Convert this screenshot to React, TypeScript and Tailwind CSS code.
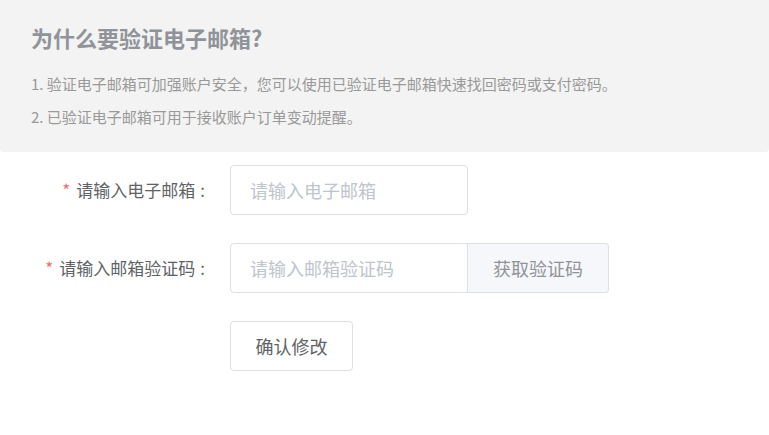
import React, { useState } from "react";

const FONT = {
  fontFamily: '"Microsoft YaHei", "Noto Sans CJK SC", "Noto Sans", sans-serif',
};

type FieldProps = {
  label: string;
  children: React.ReactNode;
};

function FormRow({ label, children }: FieldProps) {
  return (
    <div className="flex items-center">
      <label className="w-[230px] pr-[25px] text-right text-[17px] leading-[50px] text-[#606266] shrink-0">
        <span className="text-[#f56c6c] mr-[6px]">*</span>
        {label}
        <span className="ml-[5px]">:</span>
      </label>
      {children}
    </div>
  );
}

export default function App() {
  const [email, setEmail] = useState("");
  const [code, setCode] = useState("");

  return (
    <div className="w-[769px] h-[435px] bg-white overflow-hidden" style={FONT}>
      {/* 说明 */}
      <div className="bg-[#f3f3f3] rounded-b-[4px] px-[31px] pt-[22px] pb-[25px]">
        <h2 className="text-[22px] leading-[30px] font-bold text-[#909399]">
          为什么要验证电子邮箱?
        </h2>
        <p className="mt-[22px] text-[15px] leading-[20px] text-[#999999]">
          1. 验证电子邮箱可加强账户安全，您可以使用已验证电子邮箱快速找回密码或支付密码。
        </p>
        <p className="mt-[13px] text-[15px] leading-[20px] text-[#999999]">
          2. 已验证电子邮箱可用于接收账户订单变动提醒。
        </p>
      </div>

      {/* 表单 */}
      <div className="mt-[13px] flex flex-col gap-[28px]">
        <FormRow label="请输入电子邮箱">
          <input
            value={email}
            onChange={(e) => setEmail(e.target.value)}
            placeholder="请输入电子邮箱"
            className="w-[238px] h-[50px] pl-[19px] pr-[20px] border border-[#dcdfe6] rounded-[4px] text-[18px] text-[#606266] placeholder:text-[#c0c4cc] outline-none"
          />
        </FormRow>

        <FormRow label="请输入邮箱验证码">
          <div className="flex">
            <input
              value={code}
              onChange={(e) => setCode(e.target.value)}
              placeholder="请输入邮箱验证码"
              className="w-[238px] h-[50px] pl-[19px] pr-[20px] border border-[#dcdfe6] rounded-l-[4px] text-[18px] text-[#606266] placeholder:text-[#c0c4cc] outline-none"
            />
            <button className="w-[141px] h-[50px] border border-l-0 border-[#dcdfe6] rounded-r-[4px] bg-[#f5f7fa] text-[18px] text-[#909399]">
              获取验证码
            </button>
          </div>
        </FormRow>

        <div className="flex">
          <div className="w-[230px] shrink-0" />
          <button className="w-[123px] h-[50px] border border-[#dcdfe6] rounded-[4px] bg-white text-[18px] text-[#606266]">
            确认修改
          </button>
        </div>
      </div>
    </div>
  );
}
